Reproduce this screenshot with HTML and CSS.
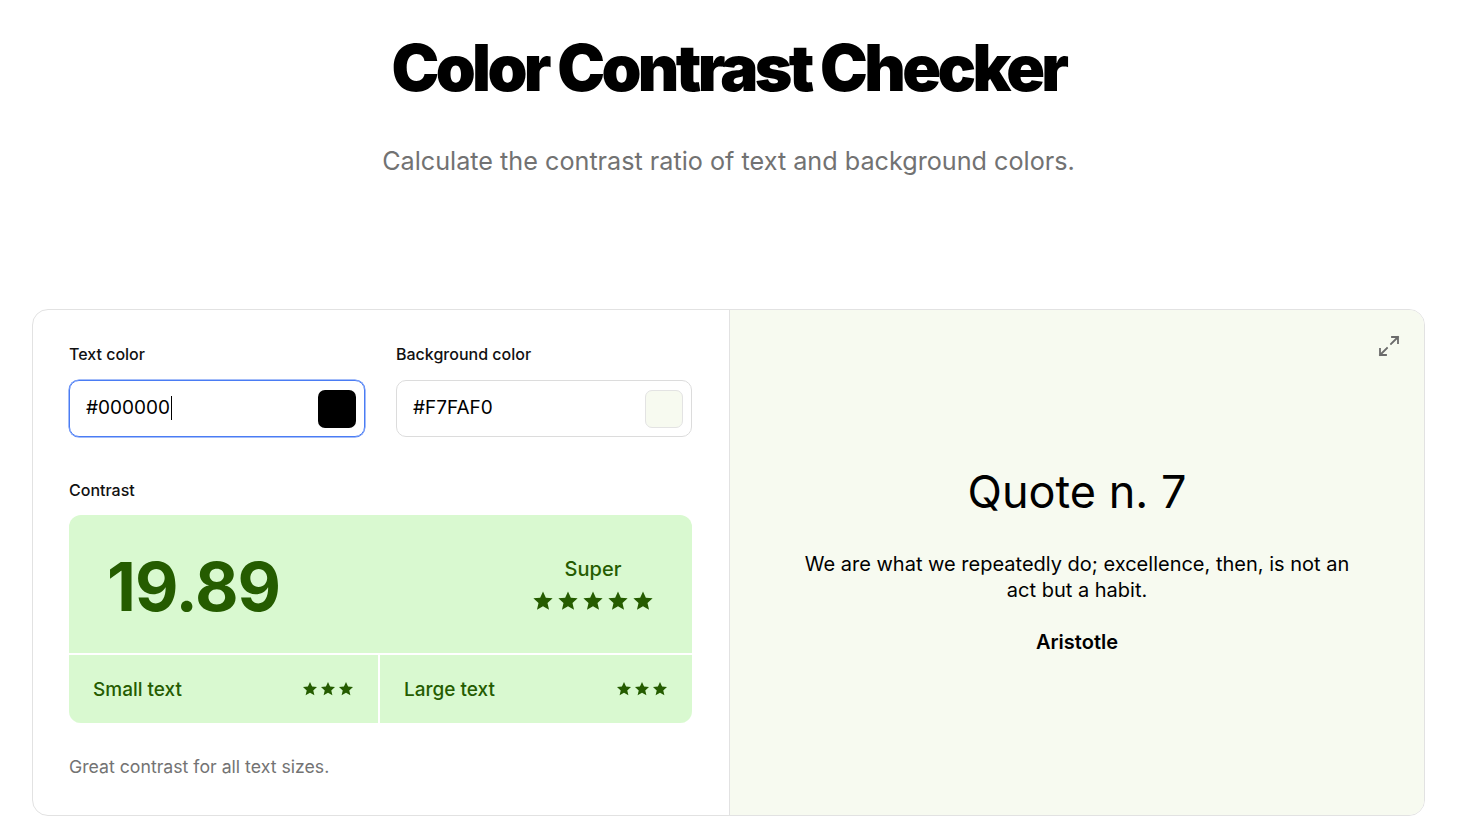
FILE: index.html
```html
<!DOCTYPE html>
<html>
<head>
<meta charset="utf-8">
<link rel="stylesheet" href="styles.css">
</head>
<body>
<header class="hero">
  <h1 class="title">Color Contrast Checker</h1>
  <p class="subtitle">Calculate the contrast ratio of text and background colors.</p>
</header>
<main class="card">
  <section class="controls">
    <div class="fields">
      <div class="field">
        <label class="label">Text color</label>
        <div class="input focused">
          <span class="value">#000000<span class="caret"></span></span>
          <span class="swatch swatch-black"></span>
        </div>
      </div>
      <div class="field">
        <label class="label">Background color</label>
        <div class="input">
          <span class="value">#F7FAF0</span>
          <span class="swatch swatch-light"></span>
        </div>
      </div>
    </div>
    <div class="label contrast-label">Contrast</div>
    <div class="result">
      <div class="result-top">
        <div class="ratio">19.89</div>
        <div class="rating">
          <div class="rating-text">Super</div>
          <div class="stars big">
            <svg viewBox="0 0 24 24"><path d="M12 1.5l3.1 6.9 7.4.7-5.6 5 1.7 7.4L12 17.6l-6.6 3.9 1.7-7.4-5.6-5 7.4-.7z"/></svg>
            <svg viewBox="0 0 24 24"><path d="M12 1.5l3.1 6.9 7.4.7-5.6 5 1.7 7.4L12 17.6l-6.6 3.9 1.7-7.4-5.6-5 7.4-.7z"/></svg>
            <svg viewBox="0 0 24 24"><path d="M12 1.5l3.1 6.9 7.4.7-5.6 5 1.7 7.4L12 17.6l-6.6 3.9 1.7-7.4-5.6-5 7.4-.7z"/></svg>
            <svg viewBox="0 0 24 24"><path d="M12 1.5l3.1 6.9 7.4.7-5.6 5 1.7 7.4L12 17.6l-6.6 3.9 1.7-7.4-5.6-5 7.4-.7z"/></svg>
            <svg viewBox="0 0 24 24"><path d="M12 1.5l3.1 6.9 7.4.7-5.6 5 1.7 7.4L12 17.6l-6.6 3.9 1.7-7.4-5.6-5 7.4-.7z"/></svg>
          </div>
        </div>
      </div>
      <div class="result-bottom">
        <div class="cell">
          <span>Small text</span>
          <div class="stars small">
            <svg viewBox="0 0 24 24"><path d="M12 1.5l3.1 6.9 7.4.7-5.6 5 1.7 7.4L12 17.6l-6.6 3.9 1.7-7.4-5.6-5 7.4-.7z"/></svg>
            <svg viewBox="0 0 24 24"><path d="M12 1.5l3.1 6.9 7.4.7-5.6 5 1.7 7.4L12 17.6l-6.6 3.9 1.7-7.4-5.6-5 7.4-.7z"/></svg>
            <svg viewBox="0 0 24 24"><path d="M12 1.5l3.1 6.9 7.4.7-5.6 5 1.7 7.4L12 17.6l-6.6 3.9 1.7-7.4-5.6-5 7.4-.7z"/></svg>
          </div>
        </div>
        <div class="cell">
          <span>Large text</span>
          <div class="stars small">
            <svg viewBox="0 0 24 24"><path d="M12 1.5l3.1 6.9 7.4.7-5.6 5 1.7 7.4L12 17.6l-6.6 3.9 1.7-7.4-5.6-5 7.4-.7z"/></svg>
            <svg viewBox="0 0 24 24"><path d="M12 1.5l3.1 6.9 7.4.7-5.6 5 1.7 7.4L12 17.6l-6.6 3.9 1.7-7.4-5.6-5 7.4-.7z"/></svg>
            <svg viewBox="0 0 24 24"><path d="M12 1.5l3.1 6.9 7.4.7-5.6 5 1.7 7.4L12 17.6l-6.6 3.9 1.7-7.4-5.6-5 7.4-.7z"/></svg>
          </div>
        </div>
      </div>
    </div>
    <p class="note">Great contrast for all text sizes.</p>
  </section>
  <section class="preview">
    <button class="expand" aria-label="Expand">
      <svg viewBox="0 0 24 24" fill="none" stroke="currentColor" stroke-width="1.8" stroke-linecap="square"><path d="M14 10l7-7M15 3h6v6M10 14l-7 7M3 15v6h6"/></svg>
    </button>
    <div class="quote">
      <h2 class="quote-title">Quote n. 7</h2>
      <p class="quote-text">We are what we repeatedly do; excellence, then, is not an act but a habit.</p>
      <p class="quote-author">Aristotle</p>
    </div>
  </section>
</main>
</body>
</html>
```
FILE: styles.css
```css
* { box-sizing: border-box; }
html, body { margin: 0; padding: 0; }
body {
  font-family: Inter, "Noto Sans", sans-serif;
  background: #ffffff;
  color: #000;
  padding: 0 42px 0 32px;
}
.hero {
  text-align: center;
  padding-top: 32px;
  height: 309px;
}
.title {
  margin: 0;
  font-size: 64px;
  font-weight: 900;
  letter-spacing: -3.6px;
  line-height: 72px;
}
.subtitle {
  margin: 41px 0 0;
  font-size: 25.2px;
  color: #727272;
  line-height: 32px;
}
.card {
  display: grid;
  grid-template-columns: 696px 1fr;
  border: 1px solid #e2e2e2;
  border-radius: 16px;
  overflow: hidden;
  height: 507px;
}
.controls {
  padding: 33px 37px 0 36px;
}
.fields {
  display: grid;
  grid-template-columns: 1fr 1fr;
  gap: 31px;
}
.label {
  display: block;
  font-size: 16px;
  font-weight: 500;
  line-height: 22px;
  color: #111;
}
.input {
  margin-top: 15px;
  height: 57px;
  border: 1px solid #dcdcdc;
  border-radius: 10px;
  display: flex;
  align-items: center;
  justify-content: space-between;
  padding: 0 8px 0 16px;
  font-size: 19px;
}
.input.focused {
  border-color: #4a7cf4;
  box-shadow: 0 0 0 0.5px #4a7cf4;
}
.value { display: inline-flex; align-items: center; margin-top: -2px; }
.caret {
  display: inline-block;
  width: 1px;
  height: 24px;
  background: #000;
  margin-left: 1px;
}
.swatch {
  width: 38px;
  height: 38px;
  border-radius: 7px;
}
.swatch-black { background: #000; }
.swatch-light { background: #f7faf0; border: 1px solid #e3e3e3; }
.contrast-label {
  margin-top: 42px;
}
.result {
  margin-top: 14px;
  background: #d9f9d0;
  border-radius: 12px;
  overflow: hidden;
  color: #255c00;
}
.result-top {
  height: 140px;
  display: flex;
  align-items: center;
  justify-content: space-between;
  padding: 0 38px 0 38px;
  border-bottom: 2px solid #fff;
}
.ratio {
  font-size: 67px;
  font-weight: 700;
  letter-spacing: -1px;
  line-height: 1;
  margin-top: 4px;
}
.rating {
  display: flex;
  flex-direction: column;
  align-items: center;
  gap: 8px;
  margin-top: 0px;
}
.rating-text {
  font-size: 20px;
  font-weight: 500;
  line-height: 26px;
}
.stars { display: flex; }
.stars svg { fill: #255c00; }
.stars.big { gap: 3px; }
.stars.big svg { width: 22px; height: 22px; }
.stars.small { gap: 2px; }
.stars.small svg { width: 16px; height: 16px; }
.result-bottom {
  display: grid;
  grid-template-columns: 309px 1fr;
  gap: 2px;
  background: #fff;
  height: 68px;
}
.cell {
  background: #d9f9d0;
  display: flex;
  align-items: center;
  justify-content: space-between;
  padding: 0 24px 0 24px;
  font-size: 19px;
  font-weight: 500;
}
.note {
  margin: 33px 0 0;
  font-size: 17.7px;
  color: #737373;
}
.preview {
  position: relative;
  background: #f7faf0;
  border-left: 1px solid #e2e2e2;
  display: flex;
  align-items: center;
  justify-content: center;
}
.expand {
  position: absolute;
  top: 24px;
  right: 22px;
  width: 26px;
  height: 26px;
  padding: 0;
  border: 0;
  background: transparent;
  color: #6b6b6b;
}
.expand svg { width: 24px; height: 24px; }
.quote {
  text-align: center;
  width: 560px;
  margin-top: -6px;
}
.quote-title {
  margin: 0;
  font-size: 45px;
  font-weight: 400;
  line-height: 54px;
}
.quote-text {
  margin: 32px 0 0;
  font-size: 20px;
  line-height: 26px;
}
.quote-author {
  margin: 27px 0 0;
  font-size: 20px;
  font-weight: 600;
}
```
